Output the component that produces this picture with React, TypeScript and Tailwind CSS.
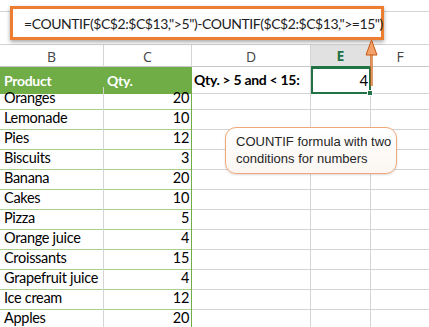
import React from "react";

const rows: [string, number][] = [
  ["Oranges", 20],
  ["Lemonade", 10],
  ["Pies", 12],
  ["Biscuits", 3],
  ["Banana", 20],
  ["Cakes", 10],
  ["Pizza", 5],
  ["Orange juice", 4],
  ["Croissants", 15],
  ["Grapefruit juice", 4],
  ["Ice cream", 12],
  ["Apples", 20],
];

const cal = { fontFamily: "Lato, 'Open Sans', sans-serif" };

export default function App() {
  return (
    <div className="relative w-[429px] h-[327px] overflow-hidden bg-white text-black">
      {/* formula bar area */}
      <div className="h-[45px] flex flex-col">
        <div className="h-[12px] border-b border-[#d4d4d4]" />
        <div className="flex-1 border-b border-[#d4d4d4]" />
      </div>
      {/* column headers */}
      <div
        className="grid grid-cols-[104px_88px_119px_60px_58px] h-[22px] border-b border-[#c6c6c6] text-[14px] text-[#444]"
        style={{ fontFamily: "'Open Sans', sans-serif" }}
      >
        <div className="flex items-center justify-center border-r border-[#d4d4d4]">B</div>
        <div className="flex items-center justify-center border-r border-[#d4d4d4]">C</div>
        <div className="flex items-center justify-center border-r border-[#d4d4d4]">D</div>
        <div className="flex items-center justify-center bg-[#e1e1e1] border-r border-[#d4d4d4] border-b-2 border-b-[#217346] font-bold text-[#217346]">
          E
        </div>
        <div className="flex items-center justify-center">F</div>
      </div>
      {/* row 2 */}
      <div className="grid grid-cols-[104px_88px_119px_60px_58px] h-[20px] text-[14px] tracking-[-0.3px]" style={cal}>
        <div className="bg-[#70ad47] text-white font-bold flex items-center pl-[4px]">Product</div>
        <div className="bg-[#70ad47] text-white font-bold flex items-center pl-[3px] border-r border-[#70ad47]">Qty.</div>
        <div className="font-bold flex items-center pl-[2px] border-r border-b border-[#d4d4d4] whitespace-nowrap">
          Qty. &gt; 5 and &lt; 15:
        </div>
        <div className="relative border-2 border-[#217346] flex items-center justify-end pr-[1px] text-[15px]">
          4
          <div className="absolute right-[-4px] bottom-[-4px] w-[6px] h-[6px] bg-[#217346] border border-white" />
        </div>
        <div className="border-b border-[#d4d4d4]" />
      </div>
      {rows.map(([p, q]) => (
        <div key={p} className="grid grid-cols-[104px_88px_119px_60px_58px] h-[20px] text-[14.5px] tracking-[-0.3px]" style={cal}>
          <div className="flex items-center pl-[4px] border-b border-[#a9d08e] border-r border-r-[#d4d4d4] whitespace-nowrap">
            {p}
          </div>
          <div className="flex items-center justify-end pr-[2px] border-b border-[#a9d08e] border-r border-r-[#70ad47]">
            {q}
          </div>
          <div className="border-r border-b border-[#d4d4d4]" />
          <div className="border-r border-b border-[#d4d4d4]" />
          <div className="border-b border-[#d4d4d4]" />
        </div>
      ))}

      {/* formula box overlay */}
      <div
        className="absolute left-[10px] top-[6px] w-[374px] h-[34px] border-[3px] border-[#ed7d31] bg-white flex items-center pl-[11px] text-[14px] tracking-[-0.45px] text-[#222] whitespace-nowrap shadow-[0_2px_4px_rgba(0,0,0,0.35)]"
        style={cal}
      >
        =COUNTIF($C$2:$C$13,"&gt;5")-COUNTIF($C$2:$C$13,"&gt;=15")
      </div>

      {/* arrow */}
      <svg className="absolute left-[364px] top-[38px]" width="16" height="50" viewBox="0 0 16 50">
        <line x1="7.5" y1="14" x2="7.5" y2="48" stroke="#c55a11" strokeWidth="2.2" />
        <line x1="7.5" y1="14" x2="7.5" y2="48" stroke="#f4a06a" strokeWidth="0.8" />
        <polygon points="7.5,2 13,17 2,17" fill="#f4a06a" stroke="#c55a11" strokeWidth="1" strokeLinejoin="round" />
      </svg>

      {/* callout */}
      <div
        className="absolute left-[225px] top-[127px] w-[172px] h-[47px] rounded-[11px] border-[1.5px] border-[#f0a878] bg-gradient-to-b from-white to-[#fbf6f2] pl-[10px] pt-[5px] text-[13px] leading-[17px] text-[#262626] whitespace-nowrap shadow-[0_1px_2px_rgba(0,0,0,0.15)]"
        style={{ fontFamily: "'Liberation Sans', Arial, sans-serif" }}
      >
        <div>COUNTIF formula with two</div>
        <div>conditions for numbers</div>
      </div>
    </div>
  );
}
